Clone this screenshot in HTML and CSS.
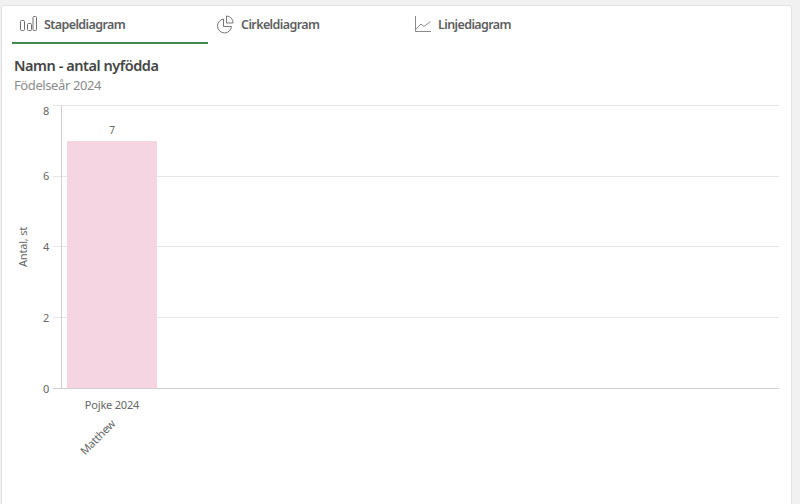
FILE: index.html
```html
<!DOCTYPE html>
<html lang="sv">
<head>
<meta charset="utf-8">
<title>Namn - antal nyfödda</title>
<link rel="stylesheet" href="styles.css">
</head>
<body>
<main class="card">
  <nav class="tabs">
    <div class="tab tab-active">
      <svg class="tab-icon" viewBox="0 0 20 20" width="20" height="20"><g fill="none" stroke="#6e6e6e" stroke-width="1"><rect x="0.5" y="6.5" width="4" height="10" rx="1"/><rect x="7.5" y="9.5" width="4" height="7" rx="1"/><rect x="13" y="2.5" width="3.5" height="14" rx="1"/></g></svg>
      <span>Stapeldiagram</span>
    </div>
    <div class="tab">
      <svg class="tab-icon" viewBox="0 0 20 20" width="20" height="20"><g fill="none" stroke="#7a7a7a" stroke-width="1"><path d="M6.5 5A7 7 0 1 0 14.5 12.5H6.5Z"/><path d="M9.5 2a6.5 6.5 0 0 1 6.5 7H9.5Z"/></g></svg>
      <span>Cirkeldiagram</span>
    </div>
    <div class="tab">
      <svg class="tab-icon" viewBox="0 0 20 20" width="20" height="20"><g fill="none" stroke="#8a8a8a" stroke-width="1"><path d="M1.5 2V17.5H17"/><path d="M2 15L7 10L10 12.5L16.5 7.5"/></g></svg>
      <span>Linjediagram</span>
    </div>
  </nav>
  <header class="heading">
    <h1 class="title">Namn - antal nyfödda</h1>
    <p class="subtitle">Födelseår 2024</p>
  </header>
  <svg class="chart" viewBox="0 0 790 410" width="790" height="410">
    <g class="grid">
      <path d="M51 10.5H777"/>
      <path d="M51 81.5H777"/>
      <path d="M51 151.5H777"/>
      <path d="M51 222.5H777"/>
    </g>
    <rect class="bar" x="65" y="46" width="90" height="247"/>
    <g class="axis">
      <path d="M59.5 10V293"/>
      <path d="M51 293.5H777"/>
    </g>
    <g class="labels">
      <text x="47" y="20" text-anchor="end">8</text>
      <text x="47" y="85" text-anchor="end">6</text>
      <text x="47" y="156" text-anchor="end">4</text>
      <text x="47" y="227" text-anchor="end">2</text>
      <text x="47" y="298" text-anchor="end">0</text>
      <text class="value" x="110" y="39" text-anchor="middle">7</text>
      <text x="110" y="314" text-anchor="middle">Pojke 2024</text>
      <text x="0" y="0" text-anchor="middle" transform="translate(25 152) rotate(-90)">Antal, st</text>
      <text x="0" y="0" text-anchor="middle" transform="translate(98.5 345) rotate(-45)">Matthew</text>
    </g>
  </svg>
</main>
</body>
</html>
```
FILE: styles.css
```css
* { box-sizing: border-box; }
html, body { height: 100%; }
body {
  margin: 0;
  background: #f1f1f1;
  font-family: "Noto Sans", "Liberation Sans", sans-serif;
  overflow: hidden;
  padding: 5px 8px 0 1px;
}
.card {
  height: 520px;
  background: #fff;
  border: 1px solid #e2e2e2;
  border-radius: 3px;
  padding-top: 1px;
}
.tabs {
  display: flex;
  padding-left: 10px;
  height: 37px;
}
.tab {
  width: 197px;
  display: flex;
  align-items: center;
  gap: 4px;
  padding: 0 0 1px 8px;
  font-size: 12.5px;
  font-weight: 600;
  letter-spacing: -0.6px;
  color: #5e5e5e;
  height: 37px;
  border-bottom: 2px solid transparent;
}
.tab-active { border-bottom-color: #3f8a4e; width: 196px; margin-right: 1px; }
.tab-icon { display: block; flex: none; }
.heading { padding: 10px 0 0 12px; }
.title { margin: 0; font-size: 14.5px; line-height: 22px; font-weight: 600; letter-spacing: -0.45px; color: #454545; }
.subtitle { margin: 0; font-size: 13px; line-height: 18px; letter-spacing: -0.4px; color: #8c8c8c; }
.chart { display: block; margin-top: 1px; }
.grid path { stroke: #e6e6e6; stroke-width: 1; fill: none; }
.axis path { stroke: #cfcfcf; stroke-width: 1; fill: none; }
.bar { fill: #f5d5e2; }
.labels text { font-size: 11px; letter-spacing: -0.2px; fill: #666; }
.labels .value { font-size: 10px; }
```
